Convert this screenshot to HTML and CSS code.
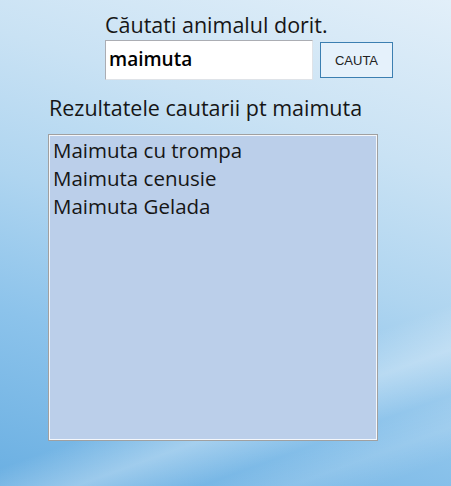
FILE: index.html
```html
<!DOCTYPE html>
<html>
<head>
<meta charset="utf-8">
<link rel="stylesheet" href="styles.css">
</head>
<body>
<div class="window">
  <div class="search">
    <div class="title">Căutati animalul dorit.</div>
    <div class="row">
      <div class="input">maimuta</div>
      <button class="btn">CAUTA</button>
    </div>
  </div>
  <div class="results">
    <div class="label">Rezultatele cautarii pt maimuta</div>
    <div class="list">
      <div class="item">Maimuta cu trompa</div>
      <div class="item">Maimuta cenusie</div>
      <div class="item">Maimuta Gelada</div>
    </div>
  </div>
</div>
</body>
</html>
```

FILE: styles.css
```css
html, body {
  margin: 0;
  padding: 0;
  width: 451px;
  height: 486px;
  overflow: hidden;
}
body {
  font-family: "Open Sans", "Liberation Sans", Arial, sans-serif;
  color: #161616;
  background:
    linear-gradient(160deg, rgba(255,255,255,0) 72%, rgba(255,255,255,0.3) 79%, rgba(255,255,255,0) 86%),
    linear-gradient(160deg, rgba(255,255,255,0) 86%, rgba(255,255,255,0.12) 91%, rgba(255,255,255,0) 96%),
    linear-gradient(198deg, #e2eff9 0%, #c9e2f4 28%, #afd5f0 50%, #8cc3eb 72%, #6aafe2 100%);
}
.window {
  display: flex;
  flex-direction: column;
  padding-top: 11px;
}
.search {
  margin-left: 105px;
  display: flex;
  flex-direction: column;
}
.title {
  font-size: 21.5px;
  line-height: 27px;
}
.row {
  display: flex;
  align-items: center;
  gap: 7px;
  margin-top: 2px;
}
.input {
  box-sizing: border-box;
  width: 208px;
  height: 40px;
  background: #fff;
  border: 1px solid #abadb3;
  border-right-color: #dfe3e8;
  border-bottom-color: #dfe3e8;
  font-size: 19px;
  line-height: 24px;
  font-weight: 600;
  padding: 6px 0 0 3px;
  color: #000;
}
.btn {
  box-sizing: border-box;
  width: 73px;
  height: 36px;
  background: #e5f1fb;
  border: 1px solid #3c7fb1;
  font-family: "Liberation Sans", Arial, sans-serif;
  font-size: 13px;
  color: #222;
  padding: 0;
}
.results {
  margin-left: 48px;
  margin-top: 14px;
  display: flex;
  flex-direction: column;
}
.label {
  font-size: 21.5px;
  line-height: 27px;
  padding-left: 1px;
}
.list {
  box-sizing: border-box;
  margin-top: 13px;
  width: 330px;
  height: 307px;
  background: #bbcfea;
  border: 1px solid #a0a0a0;
  box-shadow: inset 1px 1px 0 #f4f7fb, inset -1px -1px 0 #f4f7fb;
  padding: 1px 0 0 4px;
}
.item {
  font-size: 20.5px;
  line-height: 28px;
}
```
